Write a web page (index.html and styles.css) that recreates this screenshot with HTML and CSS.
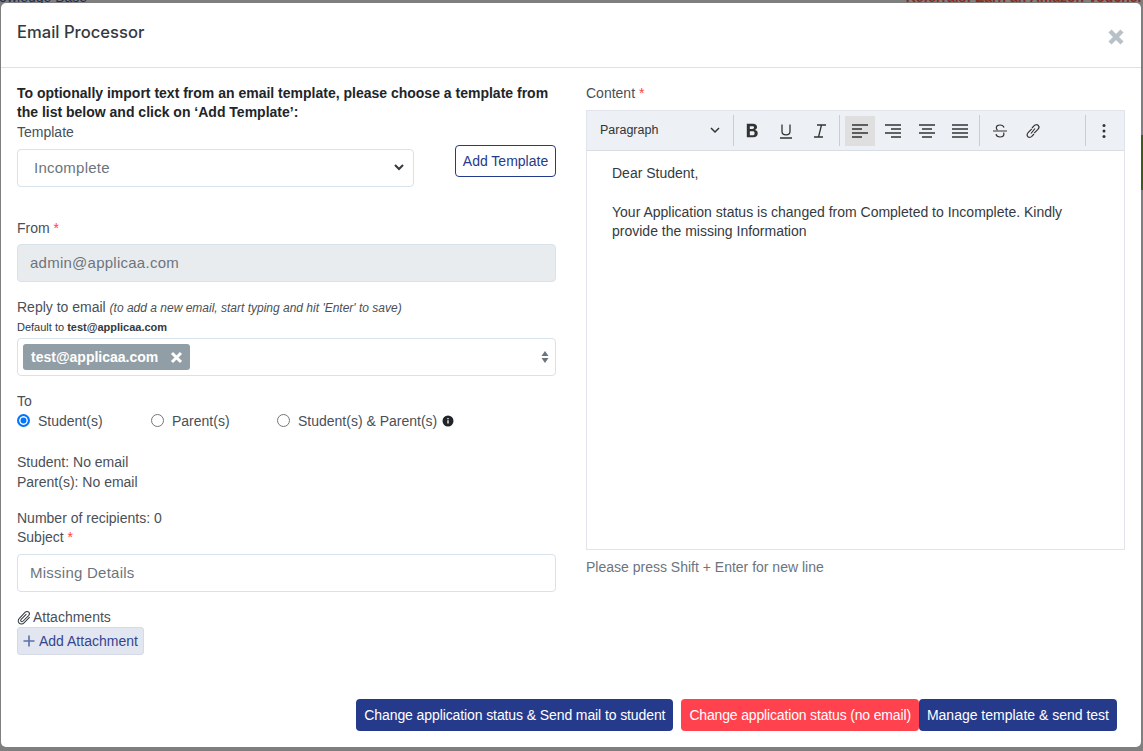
FILE: index.html
```html
<!DOCTYPE html>
<html lang="en">
<head>
    <meta charset="UTF-8">
    <title>Email Processor</title>
    <link rel="stylesheet" href="styles.css">
</head>
<body>
    <div class="behind">
        <span class="behind-link">Knowledge Base</span>
        <span class="behind-promo">Referrals: Earn an Amazon Voucher</span>
    </div>
    <div class="side-strip"></div>

    <div class="modal">
        <div class="modal-header">
            <h5 class="modal-title">Email Processor</h5>
            <svg class="close-icon" width="18" height="18" viewBox="0 0 18 18"><path d="M3 3l12 12M15 3L3 15" stroke="#b9c1c8" stroke-width="4.4"/></svg>
        </div>

        <div class="modal-body">
            <div class="col">
                <p class="intro">To optionally import text from an email template, please choose a template from the list below and click on ‘Add Template’:</p>
                <label class="label">Template</label>
                <div class="template-row">
                    <div class="control select-box">
                        <span>Incomplete</span>
                        <svg width="12" height="12" viewBox="0 0 12 12"><path d="M2 4l4 4 4-4" fill="none" stroke="#343a40" stroke-width="2"/></svg>
                    </div>
                    <button class="btn-outline">Add Template</button>
                </div>

                <label class="label from-label">From <span class="req">*</span></label>
                <div class="control disabled">admin@applicaa.com</div>

                <label class="label reply-label">Reply to email <em class="hint">(to add a new email, start typing and hit 'Enter' to save)</em></label>
                <div class="default-to">Default to <b>test@applicaa.com</b></div>
                <div class="control multi">
                    <span class="tag">test@applicaa.com
                        <svg width="13" height="13" viewBox="0 0 13 13"><path d="M2 2l9 9M11 2l-9 9" stroke="#fff" stroke-width="3"/></svg>
                    </span>
                    <svg class="updown" width="8" height="14" viewBox="0 0 8 14"><path d="M4 1l3.500 5h-7zM4 13L.5 8h7z" fill="#6c757d"/></svg>
                </div>

                <label class="label to-label">To</label>
                <div class="radios">
                    <label class="radio r-student"><span class="dot checked"></span>Student(s)</label>
                    <label class="radio r-parent"><span class="dot"></span>Parent(s)</label>
                    <label class="radio"><span class="dot"></span>Student(s) &amp; Parent(s)
                        <svg class="info" width="12" height="12" viewBox="0 0 12 12"><circle cx="6" cy="6" r="5.500" fill="#212529"/><path d="M6 5.200v3.300M6 3v1.300" stroke="#fff" stroke-width="1.300"/></svg>
                    </label>
                </div>

                <div class="line recipients">Student: No email</div>
                <div class="line">Parent(s): No email</div>
                <div class="line count">Number of recipients: 0</div>

                <label class="label">Subject <span class="req">*</span></label>
                <div class="control subject">Missing Details</div>

                <div class="attach-label">
                    <svg width="15" height="15" viewBox="0 0 16 16"><path d="M13.500 7.500l-6 6.300c-1.500 1.500-3.900 1.500-5.200.2-1.400-1.400-1.300-3.600.2-5.100l6.300-6.600c1-1 2.700-1.100 3.700-.1s.9 2.600-.1 3.700L6.300 12c-.6.600-1.500.6-2 .1s-.5-1.400.1-2L10 4.300" fill="none" stroke="#343a40" stroke-width="1.100"/></svg>
                    Attachments
                </div>
                <button class="btn-attach">
                    <svg width="12" height="12" viewBox="0 0 12 12"><path d="M6 .5v11M.5 6h11" stroke="#5c6fa8" stroke-width="1.600"/></svg>
                    Add Attachment
                </button>
            </div>

            <div class="col">
                <label class="label content-label">Content <span class="req">*</span></label>
                <div class="editor">
                    <div class="toolbar">
                        <div class="format">Paragraph
                            <svg width="10" height="10" viewBox="0 0 10 10"><path d="M1 3l4 4 4-4" fill="none" stroke="#333" stroke-width="1.500"/></svg>
                        </div>
                        <span class="sep"></span>
                        <span class="tool"><svg width="18" height="18" viewBox="0 0 16 16"><path d="M2.500 1.500h5.500c2.300 0 3.600 1.100 3.600 3 0 1.200-.7 2.100-1.800 2.500 1.500.3 2.400 1.400 2.400 2.900 0 2.200-1.500 3.600-4 3.600H2.500zM5.200 3.700v2.500h2.300c.9 0 1.400-.5 1.400-1.300s-.5-1.200-1.400-1.200zM5.200 8.300v3.500h2.500c1.100 0 1.700-.6 1.700-1.800S8.800 8.300 7.700 8.300z" fill="#333"/></svg></span>
                        <span class="tool"><svg width="16" height="16" viewBox="0 0 16 16"><path d="M2 15h12M4 1.500v7c0 4.600 8 4.600 8 0v-7" fill="none" stroke="#333" stroke-width="1.300"/></svg></span>
                        <span class="tool"><svg width="16" height="16" viewBox="0 0 16 16"><path d="M5 2h9M2 14h9M9.500 2L6.500 14" fill="none" stroke="#333" stroke-width="1.300"/></svg></span>
                        <span class="sep"></span>
                        <span class="tool on"><svg width="16" height="14" viewBox="0 0 16 14"><path d="M0 1h16M0 5h10M0 9h16M0 13h10" stroke="#333" stroke-width="1.300"/></svg></span>
                        <span class="tool"><svg width="16" height="14" viewBox="0 0 16 14"><path d="M0 1h16M6 5h10M0 9h16M6 13h10" stroke="#333" stroke-width="1.300"/></svg></span>
                        <span class="tool"><svg width="16" height="14" viewBox="0 0 16 14"><path d="M0 1h16M3 5h10M0 9h16M3 13h10" stroke="#333" stroke-width="1.300"/></svg></span>
                        <span class="tool"><svg width="16" height="14" viewBox="0 0 16 14"><path d="M0 1h16M0 5h16M0 9h16M0 13h16" stroke="#333" stroke-width="1.300"/></svg></span>
                        <span class="sep"></span>
                        <span class="tool"><svg width="16" height="16" viewBox="0 0 16 16"><path d="M1 8h14M12 4.500C11.500 2.800 10 2 8 2 5.800 2 4.300 3.100 4.300 4.800c0 1 .5 1.700 1.200 2.200M4 11.200c.4 1.800 2 2.800 4 2.800 2.300 0 3.900-1.100 3.900-2.900 0-.6-.1-1-.4-1.400" fill="none" stroke="#333" stroke-width="1.200"/></svg></span>
                        <span class="tool"><svg width="16" height="16" viewBox="0 0 16 16"><path d="M7 5l2.200-2.300c1.200-1.200 3-1.300 4-.3s.9 2.800-.3 4l-3.700 3.800M9 11l-2.200 2.300c-1.200 1.200-3 1.300-4 .3s-.9-2.800.3-4l3.700-3.800M10 5.500L6 10.500" fill="none" stroke="#333" stroke-width="1.200"/></svg></span>
                        <span class="sep sep-more"></span>
                        <span class="tool"><svg width="4" height="16" viewBox="0 0 4 16"><circle cx="2" cy="2.500" r="1.500" fill="#333"/><circle cx="2" cy="8" r="1.500" fill="#333"/><circle cx="2" cy="13.500" r="1.500" fill="#333"/></svg></span>
                    </div>
                    <div class="editor-text">
                        <p>Dear Student,</p>
                        <p>Your Application status is changed from Completed to Incomplete. Kindly provide the missing Information</p>
                    </div>
                </div>
                <div class="help">Please press Shift + Enter for new line</div>
            </div>
        </div>

        <div class="modal-footer">
            <button class="btn btn-navy btn-send">Change application status &amp; Send mail to student</button>
            <button class="btn btn-red">Change application status (no email)</button>
            <button class="btn btn-navy">Manage template &amp; send test</button>
        </div>
    </div>
</body>
</html>
```

FILE: styles.css
```css
* {
    box-sizing: border-box;
}

body {
    margin: 0;
    height: 751px;
    overflow: hidden;
    background-color: #7f7f7f;
    font-family: "Liberation Sans", Arial, sans-serif;
    font-size: 14px;
    color: #343a40;
}

/* page dimmed behind the modal, only its edge shows */
.behind {
    display: flex;
    justify-content: space-between;
    height: 3px;
    overflow: hidden;
    line-height: 1;
    font-size: 14px;
}

.behind-link {
    margin: -10px 0 0 -18px;
    color: #1c2c55;
}

.behind-promo {
    margin-top: -10px;
    font-weight: bold;
    color: #8a2a1c;
}

.side-strip {
    position: absolute;
    right: 0;
    top: 135px;
    width: 2px;
    height: 55px;
    background-color: #3f5a1c;
}

.modal {
    position: absolute;
    left: 1px;
    top: 3px;
    width: 1140px;
    height: 744px;
    display: flex;
    flex-direction: column;
    background-color: #fff;
    border-radius: 5px;
}

.modal-header {
    display: flex;
    justify-content: space-between;
    align-items: center;
    height: 65px;
    padding: 0 16px;
    border-bottom: 1px solid #dee2e6;
}

.modal-title {
    margin: 0 0 6px;
    font-family: Inter, "Liberation Sans", sans-serif;
    font-size: 16.600px;
    font-weight: 500;
    color: #343a40;
}

.close-icon {
    margin: 4px 0 0;
}

.modal-body {
    display: flex;
    gap: 30px;
    padding: 15px 16px 0;
    flex: 1;
}

.col {
    width: 539px;
    display: flex;
    flex-direction: column;
}

.intro {
    margin: 1px 0 0;
    font-weight: bold;
    line-height: 19px;
    color: #212529;
}

.label {
    display: block;
    line-height: 20px;
    color: #495057;
}

.req {
    color: #f44;
}

.control {
    height: 38px;
    padding: 0 12px 2px;
    display: flex;
    align-items: center;
    border: 1px solid #d8e2ea;
    border-radius: 4px;
    font-size: 15px;
    letter-spacing: 0.250px;
    color: #6c757d;
}

.template-row {
    display: flex;
    justify-content: space-between;
    align-items: flex-start;
    height: 77px;
    margin-top: -1px;
}

.select-box {
    width: 397px;
    margin-top: 8px;
    padding: 0 8px 2px 16px;
    justify-content: space-between;
}

.btn-outline {
    width: 101px;
    height: 32px;
    margin-top: 4px;
    padding: 0;
    background-color: #fff;
    border: 1px solid #263a8c;
    border-radius: 4px;
    font: inherit;
    color: #263a8c;
}

.from-label {
    margin-bottom: 6px;
}

.disabled {
    background-color: #e9ecef;
}

.reply-label {
    margin-top: 15px;
}

.hint {
    font-size: 12px;
    color: #495057;
}

.default-to {
    margin-top: 2px;
    line-height: 14px;
    font-size: 11px;
    color: #343a40;
}

.multi {
    margin-top: 4px;
    padding: 0 6px 0 5px;
    justify-content: space-between;
    letter-spacing: normal;
}

.tag {
    display: flex;
    align-items: center;
    gap: 12px;
    height: 26px;
    padding: 0 7px 0 8px;
    background-color: #919ea6;
    border-radius: 3px;
    font-size: 14px;
    font-weight: bold;
    color: #fff;
}

.to-label {
    margin-top: 15px;
}

.radios {
    display: flex;
    height: 20px;
}

.radio {
    display: flex;
    align-items: center;
    gap: 8px;
    color: #495057;
}

.r-student {
    width: 134px;
}

.r-parent {
    width: 126px;
}

.dot {
    width: 13px;
    height: 13px;
    margin-top: -2px;
    border: 1px solid #767676;
    border-radius: 50%;
    background-color: #fff;
}

.dot.checked {
    border: 2px solid #0075ff;
    box-shadow: inset 0 0 0 1.500px #fff;
    background-color: #0075ff;
}

.info {
    margin-left: -3px;
}

.line {
    line-height: 20px;
    color: #495057;
}

.recipients {
    margin-top: 21px;
}

.count {
    margin: 17px 0 -1px;
    line-height: 19px;
}

.subject {
    margin-top: 7px;
}

.attach-label {
    display: flex;
    align-items: center;
    gap: 1px;
    margin-top: 15px;
    height: 20px;
    color: #495057;
}

.btn-attach {
    display: flex;
    align-items: center;
    gap: 4px;
    width: 127px;
    height: 28px;
    padding: 0 5px;
    background-color: #e2e6f0;
    border: 1px solid #d5dae6;
    border-radius: 3px;
    font: inherit;
    white-space: nowrap;
    color: #33458f;
}

.content-label {
    margin-bottom: 7px;
}

.editor {
    height: 440px;
    display: flex;
    flex-direction: column;
    border: 1px solid #e1e5eb;
}

.toolbar {
    display: flex;
    align-items: center;
    height: 40px;
    padding: 0 0 0 13px;
    background-color: #edf0f4;
    border-bottom: 1px solid #d8dde4;
}

.format {
    display: flex;
    justify-content: space-between;
    align-items: center;
    width: 128px;
    margin-top: -1px;
    padding-right: 8px;
    font-size: 12.500px;
    color: #333;
}

.sep {
    width: 1px;
    height: 31px;
    margin: 0 4.500px;
    background-color: #c8ced6;
}

.tool {
    display: flex;
    justify-content: center;
    align-items: center;
    width: 30px;
    height: 30px;
    margin-left: 3.400px;
}

.sep + .tool {
    margin-left: 0;
}

.tool.on {
    background-color: #dfdfdf;
}

.sep-more {
    margin: 0 3px 0 37px;
}

.editor-text {
    padding: 13px 25px;
    font-size: 14px;
    line-height: 19px;
    color: #343a40;
}

.editor-text p {
    margin: 0 0 20px;
}

.help {
    margin-top: 7px;
    line-height: 20px;
    color: #6c757d;
}

.modal-footer {
    display: flex;
    justify-content: flex-end;
    padding: 0 24px 16px 0;
}

.btn {
    height: 32px;
    padding: 0 8px;
    border: none;
    border-radius: 4px;
    font: inherit;
    font-size: 14px;
    color: #fff;
}

.btn-send {
    letter-spacing: -0.100px;
}

.btn-navy {
    background-color: #263a8c;
}

.btn-red {
    margin-left: 8px;
    letter-spacing: -0.160px;
    background-color: #ff424d;
}
```
